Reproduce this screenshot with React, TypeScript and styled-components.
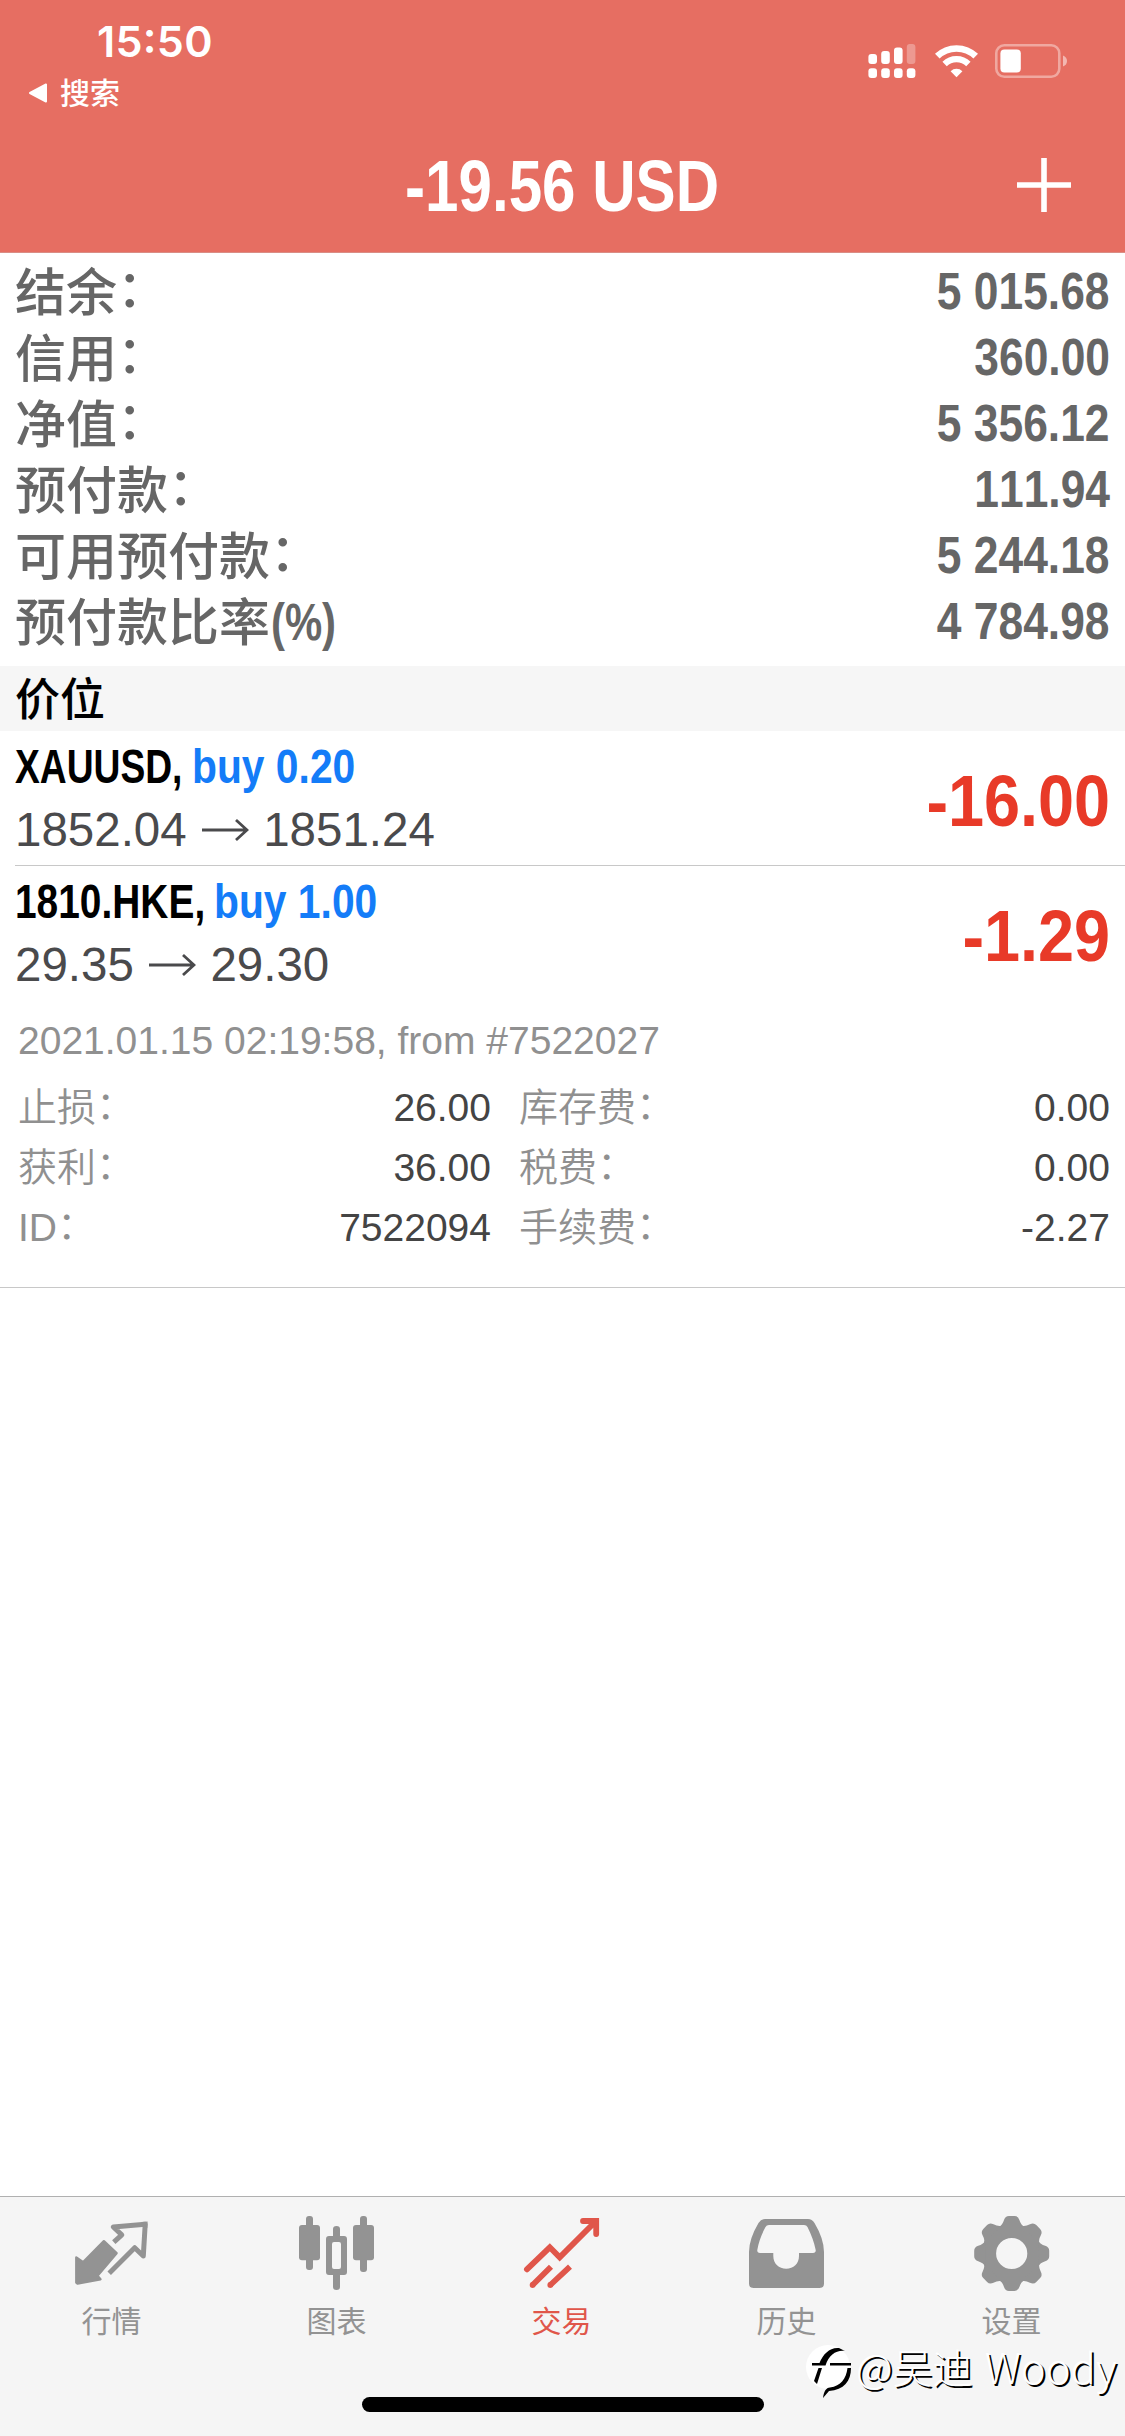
import React from "react";
import styled, { createGlobalStyle } from "styled-components";

const Global = createGlobalStyle`
  body { margin: 0; background: #fff; }
  * { box-sizing: border-box; }
`;

const latin = '"Liberation Sans", "Noto Sans CJK SC", Arial, sans-serif';
const cjk = '"Noto Sans CJK SC", "Liberation Sans", sans-serif';

const Screen = styled.div`
  width: 1125px;
  height: 2436px;
  display: flex;
  flex-direction: column;
  background: #fff;
  overflow: hidden;
  position: relative;
  font-family: ${latin};
`;

const Header = styled.header`
  height: 253px;
  flex: none;
  background: #e66e62;
  border-bottom: 1px solid #d98d85;
  color: #fff;
  display: flex;
  flex-direction: column;
`;

const StatusBar = styled.div`
  height: 117px;
  display: flex;
  justify-content: space-between;
  padding: 15px 57px 0 28px;
`;

const StatusLeft = styled.div`
  display: flex;
  flex-direction: column;
`;

const Clock = styled.div`
  font: 600 43px/53px Inter, ${latin};
  padding-left: 69px;
  letter-spacing: 0.3px;
  font-feature-settings: "calt", "case";
`;

const Back = styled.div`
  display: flex;
  align-items: center;
  gap: 12px;
  height: 50px;
  font: 500 30px/48px ${cjk};
  span { padding-bottom: 4px; }
`;

const StatusIcons = styled.div`
  display: flex;
  gap: 17px;
  padding-top: 29px;
  height: 63px;
`;

const TitleBar = styled.div`
  height: 135px;
  display: grid;
  grid-template-columns: 1fr 400px 1fr;
  align-items: center;
`;

const Narrow = styled.span<{ $scale: number; $from?: string }>`
  display: inline-block;
  white-space: pre;
  font-kerning: none;
  transform: scaleX(${(p) => p.$scale});
  transform-origin: ${(p) => p.$from ?? "left"} center;
`;

const Title = styled.h1`
  grid-column: 2;
  margin: 0;
  padding-top: 3px;
  text-align: center;
  font: 700 72px/80px ${latin};
`;

const AddButton = styled.button`
  justify-self: end;
  margin: 0 54px 0 0;
  padding: 0;
  border: 0;
  background: none;
  height: 54px;
`;

const Summary = styled.section`
  height: 413px;
  flex: none;
  padding: 5px 15px 0;
  color: #666;
`;

const SummaryRow = styled.div`
  height: 66px;
  display: flex;
  justify-content: space-between;
`;

const SummaryLabel = styled.span`
  display: flex;
  padding-top: 5px;
  font: 500 51px/62px ${latin};
`;

const Colon = styled.span<{ $line: number }>`
  line-height: ${(p) => p.$line}px;
`;

const Unit = styled.span`
  padding-left: 1px;
  font-weight: 700;
  line-height: 60px;
`;

const SummaryValue = styled.span`
  font: 700 51px/66px ${latin};
  padding-top: 1px;
`;

const Section = styled.div`
  height: 65px;
  flex: none;
  padding-left: 15px;
  background: #f6f6f6;
  color: #000;
  font: 500 45px/62px ${cjk};
`;

const Position = styled.article<{ $line?: boolean }>`
  height: 135px;
  flex: none;
  margin-left: 15px;
  padding-right: 15px;
  display: flex;
  justify-content: space-between;
  border-bottom: ${(p) => (p.$line ? "1px solid #c8c8c8" : "0")};
`;

const PositionInfo = styled.div`
  padding-top: 6px;
`;

const SymbolLine = styled.div`
  display: flex;
  height: 60px;
  font: 700 48px/60px ${latin};
  color: #000;
`;

const SymbolName = styled.span<{ $w: number }>`
  width: ${(p) => p.$w}px;
`;

const Side = styled.span`
  color: #147cf8;
`;

const PriceLine = styled.div`
  display: flex;
  align-items: center;
  height: 66px;
  font: 400 47.5px/66px ${latin};
  color: #4a4a4c;
  svg { margin: 0 14px 0 15.5px; }
`;

const Profit = styled.div`
  font: 700 72px/140px ${latin};
  color: #e83a28;
`;

const Details = styled.section`
  height: 287px;
  flex: none;
  padding: 10px 15px 0 18px;
  border-bottom: 1px solid #c8c8c8;
  font-size: 39px;
  color: #909090;
`;

const Opened = styled.div`
  height: 60px;
  line-height: 60px;
`;

const DetailGrid = styled.div`
  display: grid;
  grid-template-columns: 473px 591px;
  column-gap: 28px;
  padding-top: 6px;
`;

const Detail = styled.div`
  height: 60px;
  display: flex;
  justify-content: space-between;
  line-height: 60px;
`;

const DetailLabel = styled.span`
  display: flex;
  font: 350 39px/62px ${latin};
`;

const DetailValue = styled.span`
  color: #444;
  padding-top: 1px;
`;

const TabBar = styled.nav`
  margin-top: auto;
  height: 240px;
  flex: none;
  background: #f5f5f5;
  border-top: 1px solid #b0b0b0;
  display: grid;
  grid-template-columns: repeat(5, 225px);
`;

const Tab = styled.a<{ $active?: boolean }>`
  display: flex;
  flex-direction: column;
  align-items: center;
  padding-top: 19px;
  color: ${(p) => (p.$active ? "#e0564a" : "#939393")};
  svg { overflow: visible; margin-bottom: 12px; }
`;

const TabLabel = styled.span`
  padding-right: 2px;
  font: 400 30px/37px ${latin};
`;

const HomeIndicator = styled.div`
  position: absolute;
  left: 362px;
  top: 2397px;
  width: 402px;
  height: 15px;
  border-radius: 8px;
  background: #000;
`;

const Watermark = styled.div`
  position: absolute;
  left: 806px;
  top: 2334px;
  height: 64px;
  display: flex;
  align-items: center;
  color: #fff;
  font: 300 40px/64px ${cjk};
  white-space: pre;
  text-shadow: 2px 2px 0 #000;
  svg { margin-top: 12px; }
`;

const WatermarkName = styled.span`
  font-size: 42px;
  margin-left: 3px;
`;

const Signal = () => (
  <svg width="50" height="34" viewBox="0 0 50 34" fill="#fff">
    {[10, 7, 3.5, 0].map((y, i) => (
      <g key={y}>
        <rect x={0.4 + i * 12.8} y={y} width="8.6" height={20 - y} rx="3" opacity={i === 3 ? 0.3 : 1} />
        <rect x={0.4 + i * 12.8} y="24.3" width="8.6" height="9.7" rx="3" />
      </g>
    ))}
  </svg>
);

const Wifi = () => (
  <svg width="43" height="34" viewBox="0 0 43 34" fill="none" stroke="#fff">
    <path d="M2.3 12.2A27.6 27.6 0 0 1 40.7 12.2" strokeWidth="6.6" />
    <path d="M9.6 20A17 17 0 0 1 33.4 20" strokeWidth="6.2" />
    <path d="M21.5 33.2L15.6 27.2A8.4 8.4 0 0 1 27.4 27.2Z" fill="#fff" stroke="none" />
  </svg>
);

const Battery = () => (
  <svg width="73" height="34" viewBox="0 0 73 34">
    <rect x="1.3" y="1.3" width="63" height="31.4" rx="8" fill="none" stroke="#fff" strokeOpacity=".4" strokeWidth="2.6" />
    <rect x="5.4" y="5.6" width="20.4" height="22.8" rx="4" fill="#fff" />
    <path d="M68 11.5Q72 13 72 17Q72 21 68 22.5Z" fill="#fff" fillOpacity=".5" />
  </svg>
);

const Arrow = () => (
  <svg width="47" height="24" viewBox="0 0 47 24" fill="none" stroke="currentColor" strokeWidth="2.8">
    <path d="M0 12H45M34 2L45 12L34 22" />
  </svg>
);

const QuotesIcon = () => (
  <svg width="75" height="75" viewBox="0 0 75 75">
    <path d="M28.900 25.200L41.600 37.200L22.500 59.800L25.500 63.200L2.500 67.500L1.300 66.500V41.500L8.200 46.200Z" fill="currentColor" stroke="currentColor" strokeWidth="2.400" strokeLinejoin="round" />
    <path d="M38.800 26.200L46.800 18.900L38.300 11L70.200 8.300L68.300 40L59.700 31.700L34.200 57.200" fill="none" stroke="currentColor" strokeWidth="5" strokeLinejoin="round" />
    <path d="M66 5.900L72.600 5.600L72.300 12Z" fill="currentColor" />
  </svg>
);

const ChartIcon = () => (
  <svg width="75" height="75" viewBox="0 0 75 75" fill="currentColor">
    <rect x="6" y="0" width="7" height="54" rx="3" />
    <rect x="-1" y="9" width="21" height="35.3" rx="3" />
    <rect x="60" y="0" width="7" height="56" rx="3" />
    <rect x="53" y="9" width="21" height="35.3" rx="3" />
    <path d="M33 22V13Q33 10 36.500 10T40 13V22ZM33 57V71Q33 74 36.500 74T40 71V57Z" />
    <path fillRule="evenodd" d="M29 20H44Q47 20 47 23V56Q47 59 44 59H29Q26 59 26 56V23Q26 20 29 20ZM34 26Q32 26 32 28V51Q32 53 34 53H39Q41 53 41 51V28Q41 26 39 26Z" />
  </svg>
);

const TradeIcon = () => (
  <svg width="75" height="75" viewBox="0 0 75 75" fill="none" stroke="currentColor" strokeWidth="5.8">
    <path d="M1.9 53.3L24.8 31.3L34.7 41.3L70.5 5.5" strokeLinecap="round" />
    <path d="M58 5H71.2V18" strokeLinecap="round" />
    <path d="M60 3L73.6 2.4L73 16Z" fill="currentColor" stroke="none" />
    <path d="M7.6 69L26 50.7M25.3 69L45 50.7" />
    <path d="M7.6 69h.01M25.3 69h.01" strokeLinecap="round" />
  </svg>
);

const HistoryIcon = () => (
  <svg width="75" height="75" viewBox="0 0 75 75" fill="currentColor">
    <path fillRule="evenodd" d="M15 3H58Q62 3 64.5 7Q74 23 74 36V67.5Q74 72 69.5 72H3.5Q-1 72 -1 67.5V36Q-1 23 8.5 7Q11 3 15 3ZM19 9Q16.500 9 15.500 11Q9 23 7.300 34Q7 37 10 37H23.300V40C23.300 48 29 52.700 36.200 52.700C43.500 52.700 49 48 49 40V37H63Q66 37 65.700 34Q63.500 23 57.500 11Q56.500 9 54 9Z" />
  </svg>
);

const teeth = Array.from({ length: 8 }, (_, k) => k * 45);

const SettingsIcon = () => (
  <svg width="75" height="75" viewBox="0 0 75 75" fill="currentColor">
    <circle cx="36.7" cy="37.5" r="22.600" fill="none" stroke="currentColor" strokeWidth="14" />
    {teeth.map((a) => (
      <path key={a} transform={`rotate(${a} 36.700 37.500)`} d="M24 11Q27.500 9 29 4Q30.300 0 34 0H39.400Q43.100 0 44.400 4Q45.900 9 49.400 11Z" />
    ))}
  </svg>
);

const FollowLogo = () => (
  <svg width="50" height="56" viewBox="0 0 50 56">
    <circle cx="22" cy="23" r="22" fill="#fff" />
    <path d="M6 19H13.500C17 10 24 3 33 4L39 7C30 6 23 11 19.500 21.500H6ZM24 19H45V21.500H24ZM45 24C45 37 38 46 23 47L17 54C18 47 20 44 24 43.500C35 42 40 35 41.500 24ZM12.500 24H16L11 40L8 37Z" fill="#000" />
  </svg>
);

const wideColon = "\uff1a";

const summary = [
  ["结余", wideColon, "5 015.68"],
  ["信用", wideColon, "360.00"],
  ["净值", wideColon, "5 356.12"],
  ["预付款", wideColon, "111.94"],
  ["可用预付款", wideColon, "5 244.18"],
  ["预付款比率", "(%)", "4 784.98"],
];

const details = [
  ["止损", "26.00"],
  ["库存费", "0.00"],
  ["获利", "36.00"],
  ["税费", "0.00"],
  ["ID", "7522094"],
  ["手续费", "-2.27"],
];

const tabs = [
  { label: "行情", Icon: QuotesIcon },
  { label: "图表", Icon: ChartIcon },
  { label: "交易", Icon: TradeIcon, active: true },
  { label: "历史", Icon: HistoryIcon },
  { label: "设置", Icon: SettingsIcon },
];

const positions = [
  { symbol: "XAUUSD,", symbolScale: 0.775, width: 177, side: "buy 0.20", open: "1852.04", now: "1851.24", profit: "-16.00" },
  { symbol: "1810.HKE,", symbolScale: 0.81, width: 199, side: "buy 1.00", open: "29.35", now: "29.30", profit: "-1.29" },
];

export default function App() {
  return (
    <Screen>
      <Global />
      <Header>
        <StatusBar>
          <StatusLeft>
            <Clock>15:50</Clock>
            <Back>
              <svg width="20" height="20" viewBox="0 0 20 20" fill="#fff">
                <path d="M18 1.500V18.500L2 10Z" stroke="#fff" strokeWidth="2" strokeLinejoin="round" />
              </svg>
              <span>搜索</span>
            </Back>
          </StatusLeft>
          <StatusIcons>
            <Signal />
            <Wifi />
            <Battery />
          </StatusIcons>
        </StatusBar>
        <TitleBar>
          <Title>
            <Narrow $scale={0.835} $from="center">-19.56 USD</Narrow>
          </Title>
          <AddButton aria-label="add">
            <svg width="54" height="54" viewBox="0 0 54 54" stroke="#fff" strokeWidth="5.600">
              <path d="M0 27H54M27 0V54" />
            </svg>
          </AddButton>
        </TitleBar>
      </Header>
      <Summary>
        {summary.map(([label, suffix, value]) => (
          <SummaryRow key={label}>
            <SummaryLabel>
              {label}
              {suffix === "(%)" ? (
                <Unit>
                  <Narrow $scale={0.82}>{suffix}</Narrow>
                </Unit>
              ) : (
                <Colon $line={53}>{suffix}</Colon>
              )}
            </SummaryLabel>
            <SummaryValue>
              <Narrow $scale={0.87} $from="right">{value}</Narrow>
            </SummaryValue>
          </SummaryRow>
        ))}
      </Summary>
      <Section>价位</Section>
      {positions.map((p, i) => (
        <Position key={p.symbol} $line={i === 0}>
          <PositionInfo>
            <SymbolLine>
              <SymbolName $w={p.width}>
                <Narrow $scale={p.symbolScale}>{p.symbol}</Narrow>
              </SymbolName>
              <Side>
                <Narrow $scale={0.85}>{p.side}</Narrow>
              </Side>
            </SymbolLine>
            <PriceLine>
              {p.open}
              <Arrow />
              {p.now}
            </PriceLine>
          </PositionInfo>
          <Profit>
            <Narrow $scale={0.9} $from="right">{p.profit}</Narrow>
          </Profit>
        </Position>
      ))}
      <Details>
        <Opened>2021.01.15 02:19:58, from #7522027</Opened>
        <DetailGrid>
          {details.map(([label, value]) => (
            <Detail key={label}>
              <DetailLabel>
                {label}
                <Colon $line={57}>{wideColon}</Colon>
              </DetailLabel>
              <DetailValue>{value}</DetailValue>
            </Detail>
          ))}
        </DetailGrid>
      </Details>
      <TabBar>
        {tabs.map(({ label, Icon, active }) => (
          <Tab key={label} $active={active}>
            <Icon />
            <TabLabel>{label}</TabLabel>
          </Tab>
        ))}
      </TabBar>
      <HomeIndicator />
      <Watermark>
        <FollowLogo />
        <span>@吴迪</span>
        <WatermarkName> Woody</WatermarkName>
      </Watermark>
    </Screen>
  );
}
